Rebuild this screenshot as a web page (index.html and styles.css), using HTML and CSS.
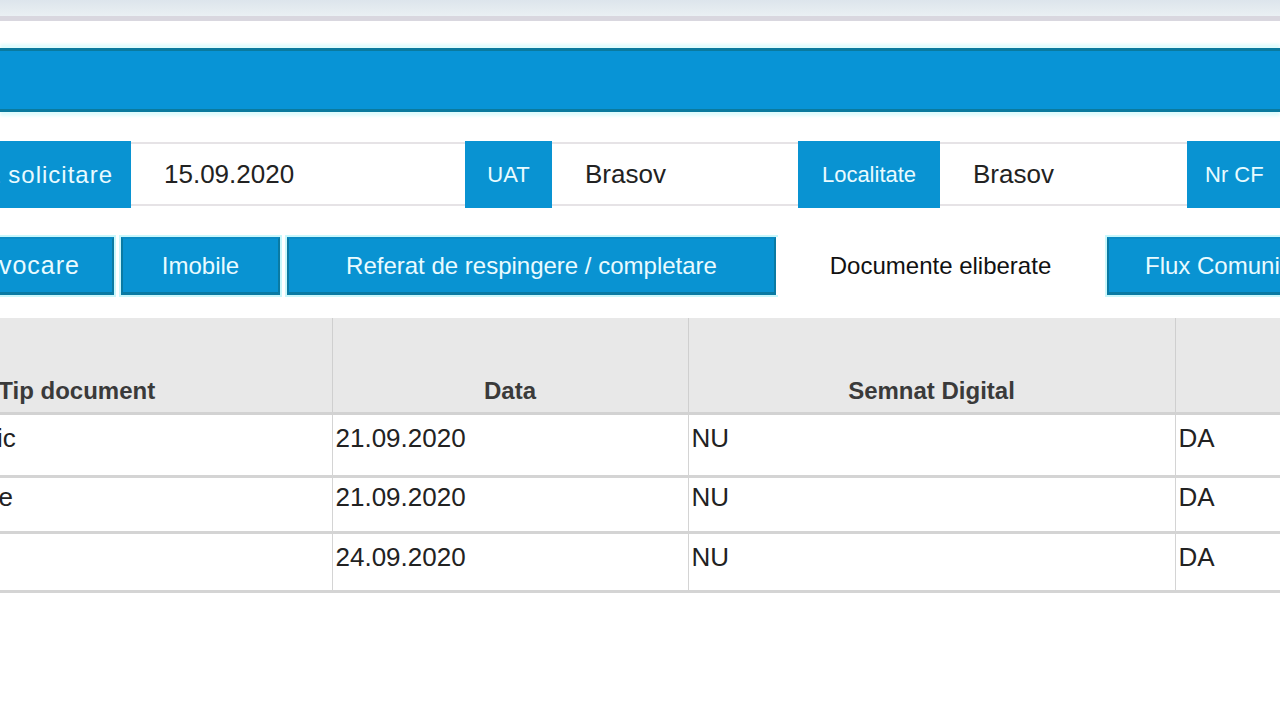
FILE: index.html
```html
<!DOCTYPE html>
<html lang="ro">
<head>
<meta charset="utf-8">
<title>Documente eliberate</title>
<link rel="stylesheet" href="styles.css">
</head>
<body>
<div class="topbar"></div>
<div class="banner"></div>
<div class="shift">
  <div class="info-row">
    <div class="lbl w-lbl1">Data solicitare</div>
    <div class="fld w-f1">15.09.2020</div>
    <div class="lbl w-lbl2">UAT</div>
    <div class="fld w-f2">Brasov</div>
    <div class="lbl w-lbl3">Localitate</div>
    <div class="fld w-f3">Brasov</div>
    <div class="lbl w-lbl4">Nr CF</div>
  </div>
  <div class="tabs">
    <div class="tab t1">Convocare</div>
    <div class="tab t2">Imobile</div>
    <div class="tab t3">Referat de respingere / completare</div>
    <div class="tab active t4">Documente eliberate</div>
    <div class="tab t5">Flux Comunicare</div>
  </div>
  <table class="docs">
    <thead>
      <tr>
        <th class="c1">Tip document</th>
        <th class="c2">Data</th>
        <th class="c3">Semnat Digital</th>
        <th class="c4">Validat</th>
      </tr>
    </thead>
    <tbody>
      <tr class="r1">
        <td>Memoriu tehnic</td>
        <td>21.09.2020</td>
        <td>NU</td>
        <td>DA</td>
      </tr>
      <tr class="r2">
        <td>Extras de carte</td>
        <td>21.09.2020</td>
        <td>NU</td>
        <td>DA</td>
      </tr>
      <tr class="r3">
        <td></td>
        <td>24.09.2020</td>
        <td>NU</td>
        <td>DA</td>
      </tr>
    </tbody>
  </table>
</div>
</body>
</html>
```
FILE: styles.css
```css
html, body {
  margin: 0;
  padding: 0;
  background: #ffffff;
  overflow: hidden;
  width: 1280px;
  height: 720px;
  font-family: "Liberation Sans", Arial, sans-serif;
}

.topbar {
  height: 16px;
  background: linear-gradient(#dde5ec, #eaf0f3);
  border-bottom: 5px solid #d9d7df;
}

.banner {
  margin-top: 27px;
  height: 58px;
  background: #0894d6;
  border-top: 3px solid #0a7a9e;
  border-bottom: 3px solid #0a7a9e;
  box-shadow: 0 -4px 3px #dffcfd, 0 4px 3px #dffcfd;
}

.shift {
  margin-left: -60px;
  width: 1400px;
}

.info-row {
  display: flex;
  margin-top: 29px;
  height: 67px;
}

.lbl {
  background: #0993d2;
  color: #e9fbff;
  font-size: 22px;
  display: flex;
  align-items: center;
  justify-content: center;
  box-sizing: border-box;
  flex: none;
}

.fld {
  box-sizing: border-box;
  border-top: 2px solid #e6e3e6;
  border-bottom: 2px solid #e6e3e6;
  margin: 1px 0 2px;
  padding-left: 33px;
  font-size: 26px;
  color: #222222;
  display: flex;
  align-items: center;
  flex: none;
}

.w-lbl1 { width: 191px; justify-content: flex-end; padding-right: 18px; font-size: 24px; letter-spacing: 1px; white-space: nowrap; overflow: hidden; }
.w-f1 { width: 334px; }
.w-lbl2 { width: 87px; }
.w-f2 { width: 246px; }
.w-lbl3 { width: 142px; }
.w-f3 { width: 247px; }
.w-lbl4 { width: 140px; justify-content: flex-start; padding-left: 18px; }

.tabs {
  display: flex;
  margin-top: 29px;
  height: 58px;
}

.tab {
  box-sizing: border-box;
  background: #0993d2;
  color: #e9fbff;
  font-size: 24px;
  display: flex;
  align-items: center;
  justify-content: center;
  border: 2px solid #0a7aa3;
  border-top-color: #0a8bc4;
  border-bottom-width: 3px;
  outline: 2px solid #c9f7fb;
  flex: none;
  white-space: nowrap;
  overflow: hidden;
}

.tab.active {
  background: #ffffff;
  color: #111111;
  border-color: #ffffff;
  outline: none;
}

.t1 { width: 174px; margin-right: 7px; justify-content: flex-end; padding-right: 32px; font-size: 25px; letter-spacing: 1px; }
.t2 { width: 159px; margin-right: 7px; }
.t3 { width: 489px; }
.t4 { width: 329px; margin-right: 2px; }
.t5 { width: 240px; justify-content: flex-start; padding-left: 36px; }

.docs {
  margin-top: 23px;
  border-collapse: collapse;
  table-layout: fixed;
  width: 1648px;
  margin-left: -118px;
}

.docs th {
  background: #e8e8e8;
  height: 95px;
  box-sizing: border-box;
  vertical-align: bottom;
  padding: 0 0 7px;
  font-size: 24px;
  font-weight: bold;
  color: #3a3a3a;
  text-align: center;
  border-left: 1px solid #cfcfcf;
  border-bottom: 3px solid #d2d2d2;
}

.docs th.c1 { width: 510px; border-left: none; }
.docs th.c2 { width: 356px; }
.docs th.c3 { width: 487px; }
.docs th.c4 { width: 295px; }

.docs td {
  vertical-align: top;
  padding: 8px 0 0 3px;
  font-size: 26px;
  color: #222222;
  border-left: 1px solid #d4d4d4;
  border-bottom: 3px solid #d4d4d4;
  white-space: nowrap;
  overflow: hidden;
}

.docs td:first-child { border-left: none; padding-left: 16px; }

.r1 td { height: 52px; }
.r2 td { height: 49px; padding-top: 4px; }
.r3 td { height: 48px; padding-top: 8px; }
```
